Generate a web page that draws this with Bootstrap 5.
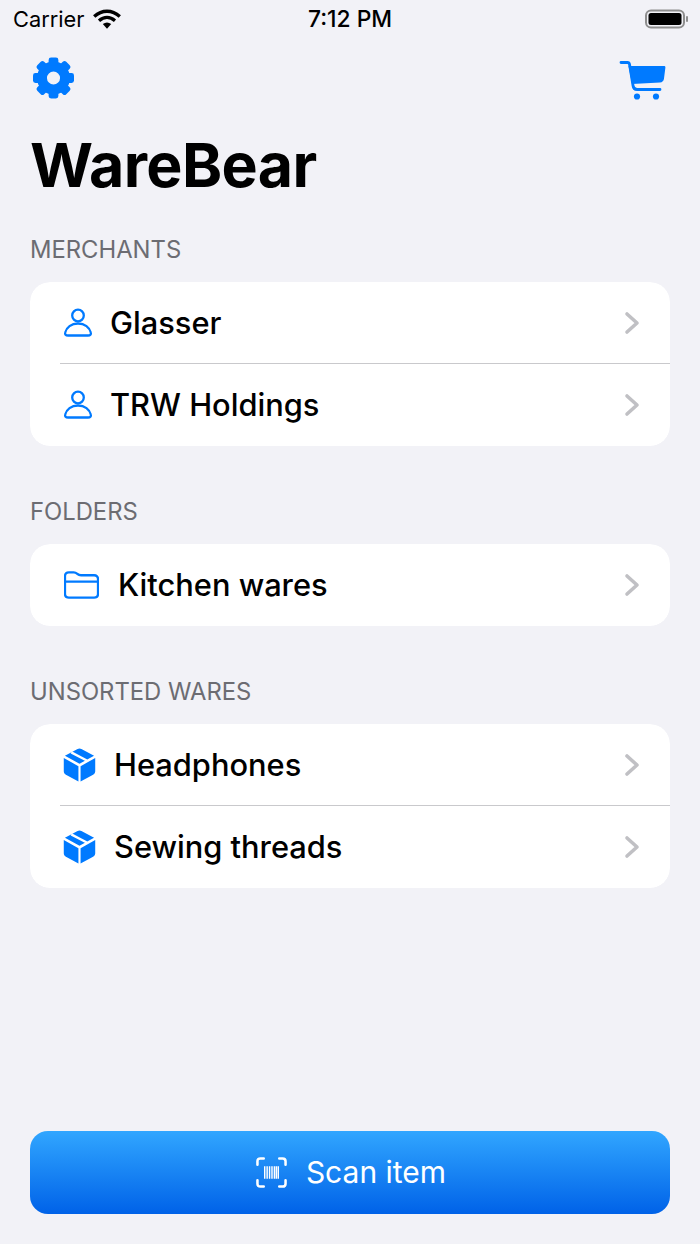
<!doctype html>
<html lang="en"><head><meta charset="utf-8"><title>WareBear</title>
<link href="https://cdn.jsdelivr.net/npm/bootstrap@5.3.0/dist/css/bootstrap.min.css" rel="stylesheet">
<style>
html,body{height:100%}
body{background:#f2f2f7;font-family:Inter,"Liberation Sans",sans-serif;color:#000;overflow:hidden}
.screen{height:1244px;padding:0 30px 30px}
.status{height:38px;margin:0 -30px;padding:0 11px 0 13px;font-size:21.8px;line-height:38px;position:relative}
.status .clock{position:absolute;left:0;right:0;text-align:center;font-weight:500;font-size:22.8px}
.wifi{margin-left:9px}
.topbar{height:48px;margin-top:19px;padding:0 4px 0 3px}
.carticon{margin-top:3px}
.apptitle{font-size:60.8px;font-weight:700;line-height:74px;letter-spacing:-.6px;margin:23px 0 0 0}
.seclabel{font-size:23.8px;line-height:28px;color:#6c6c72;margin:0;text-transform:uppercase;font-weight:400}
.seclabel.first{margin-top:34px}
.seclabel.next{margin-top:52px}
.rows{border-radius:20px;border:0;margin-top:18px;overflow:hidden;--bs-list-group-bg:#fff;--bs-list-group-color:#000}
.rowitem{height:82px;padding:0 30px;border:0;font-size:30.8px;font-weight:500;position:relative}
.rowitem+.rowitem::before{content:"";position:absolute;left:30px;right:0;top:-1px;height:1px;background:#c9c9cc}
.rowitem .chev{margin-left:auto}
.ico-person{margin-left:4px;margin-right:18px}
.ico-folder{margin-left:4px;margin-right:19px}
.ico-box{margin-left:3px;margin-right:18px}
.scanbtn{margin-top:auto;height:83px;border-radius:18px;border:0;background:linear-gradient(#31a6ff,#0062e8);color:#fff;font-size:30px;gap:19px;padding-left:14px}
.scanbtn:hover{color:#fff}
</style></head><body>
<svg width="0" height="0" class="position-absolute"><defs>
  <symbol id="chev" viewBox="0 0 16 24"><path d="M3 3l10 9-10 9" fill="none" stroke="#c0c0c4" stroke-width="3.600" stroke-linecap="round" stroke-linejoin="round"/></symbol>
  <symbol id="person" viewBox="0 0 28 30"><g fill="none" stroke="#007aff" stroke-width="2.300"><circle cx="14" cy="7.500" r="5.800"/><path d="M4 27.500h20c2.300 0 3.300-1.300 2.800-3-1.300-5-6-9-12.800-9S2.500 19.500 1.200 24.500c-.5 1.700.5 3 2.800 3z"/></g></symbol>
  <symbol id="box" viewBox="0 0 34 35"><path fill="#007aff" d="M15 1c1.300-.7 2.700-.7 4 0l13 7L17 16.300 2 8zM.8 10.300 15.900 18.700V34.500L3 27.500C1.500 26.700.8 25.400.8 24zM33.200 10.300V24c0 1.400-.7 2.700-2.200 3.500L18.100 34.500V18.700z"/><path d="M8.500 4.500 24.500 12.800" stroke="#fff" stroke-width="2.400"/></symbol>
</defs></svg>
<div class="screen d-flex flex-column">
  <div class="status d-flex align-items-center">
    <span class="clock">7:12 PM</span>
    <span>Carrier</span>
    <svg class="wifi" width="28" height="20" viewBox="0 0 28 20"><path d="M1.200 7.500C9 .5 19 .5 26.800 7.500" fill="none" stroke="#000" stroke-width="3.400"/><path d="M6 11.700C11 7.500 17 7.500 22 11.700" fill="none" stroke="#000" stroke-width="3.400"/><path d="M9.800 15C12.500 13 15.500 13 18.200 15L14 19.800Z" fill="#000"/></svg>
    <svg class="ms-auto position-relative" width="44" height="20" viewBox="0 0 44 20"><rect x="1" y="1.500" width="38" height="17" rx="5" fill="none" stroke="#8e8e8e" stroke-width="2"/><rect x="3.500" y="4" width="33" height="12" rx="2.500" fill="#000"/><rect x="41" y="7" width="2" height="6" rx="1" fill="#8e8e8e"/></svg>
  </div>
  <div class="topbar d-flex justify-content-between align-items-start">
    <svg width="41" height="42" viewBox="0 0 42 42" fill="#007aff">
      <path fill-rule="evenodd" d="M21 4a17 17 0 1 0 0 34 17 17 0 0 0 0-34zM21 14.300a6.700 6.700 0 1 1 0 13.400 6.700 6.700 0 0 1 0-13.400z"/>
      <g><rect x="16" y="0" width="10" height="8" rx="2.500"/><rect x="16" y="0" width="10" height="8" rx="2.500" transform="rotate(45 21 21)"/><rect x="16" y="0" width="10" height="8" rx="2.500" transform="rotate(90 21 21)"/><rect x="16" y="0" width="10" height="8" rx="2.500" transform="rotate(135 21 21)"/><rect x="16" y="0" width="10" height="8" rx="2.500" transform="rotate(180 21 21)"/><rect x="16" y="0" width="10" height="8" rx="2.500" transform="rotate(225 21 21)"/><rect x="16" y="0" width="10" height="8" rx="2.500" transform="rotate(270 21 21)"/><rect x="16" y="0" width="10" height="8" rx="2.500" transform="rotate(315 21 21)"/></g>
    </svg>
    <svg class="carticon" width="47" height="42" viewBox="0 0 47 42"><path d="M2 2.500h6.500c1.300 0 1.800.6 2 1.800L14 25.500c.3 2.500 1.500 4 4 4h23" fill="none" stroke="#007aff" stroke-width="2.800" stroke-linecap="round"/><path d="M9.500 6h35.500c1 0 1.500.5 1.400 1.500l-1.400 11c-.3 2.500-1.700 3.800-4 4L13 24z" fill="#007aff"/><circle cx="18" cy="36.500" r="3.100" fill="#007aff"/><circle cx="37" cy="36.500" r="3.100" fill="#007aff"/></svg>
  </div>
  <h1 class="apptitle">WareBear</h1>

  <h2 class="seclabel first">Merchants</h2>
  <div class="list-group rows">
    <a class="list-group-item rowitem d-flex align-items-center"><svg class="ico-person" width="28" height="30"><use href="#person"/></svg><span>Glasser</span><svg class="chev" width="16" height="24"><use href="#chev"/></svg></a>
    <a class="list-group-item rowitem d-flex align-items-center"><svg class="ico-person" width="28" height="30"><use href="#person"/></svg><span>TRW Holdings</span><svg class="chev" width="16" height="24"><use href="#chev"/></svg></a>
  </div>

  <h2 class="seclabel next">Folders</h2>
  <div class="list-group rows">
    <a class="list-group-item rowitem d-flex align-items-center"><svg class="ico-folder" width="35" height="28" viewBox="0 0 36 28" fill="none" stroke="#007aff" stroke-width="2.400"><path d="M5 27h26c2.500 0 4-1.500 4-4V8c0-2.500-1.500-4-4-4H17.500c-2 0-2.500-.3-3.800-1.500C12.500 1.500 11.500 1 10 1H5C2.500 1 1 2.500 1 5v18c0 2.500 1.500 4 4 4z"/><path d="M1 10.500h34"/></svg><span>Kitchen wares</span><svg class="chev" width="16" height="24"><use href="#chev"/></svg></a>
  </div>

  <h2 class="seclabel next">Unsorted wares</h2>
  <div class="list-group rows">
    <a class="list-group-item rowitem d-flex align-items-center"><svg class="ico-box" width="33" height="34"><use href="#box"/></svg><span>Headphones</span><svg class="chev" width="16" height="24"><use href="#chev"/></svg></a>
    <a class="list-group-item rowitem d-flex align-items-center"><svg class="ico-box" width="33" height="34"><use href="#box"/></svg><span>Sewing threads</span><svg class="chev" width="16" height="24"><use href="#chev"/></svg></a>
  </div>

  <button type="button" class="btn scanbtn d-flex align-items-center justify-content-center">
    <svg width="31" height="31" viewBox="0 0 32 32" fill="none" stroke="#fff" stroke-width="2.600" stroke-linecap="round"><path d="M1.500 8V4.500c0-2 1-3 3-3H8M24 1.500h3.500c2 0 3 1 3 3V8M30.500 24v3.500c0 2-1 3-3 3H24M8 30.500H4.500c-2 0-3-1-3-3V24"/><path d="M9 9.500v13M11.500 9.500v13M14 9.500v13M16.500 9.500v13M19 9.500v13M21 9.500v13M23 9.500v13" stroke-linecap="butt" stroke-width="1.500"/></svg>
    <span>Scan item</span>
  </button>
</div>
</body></html>
